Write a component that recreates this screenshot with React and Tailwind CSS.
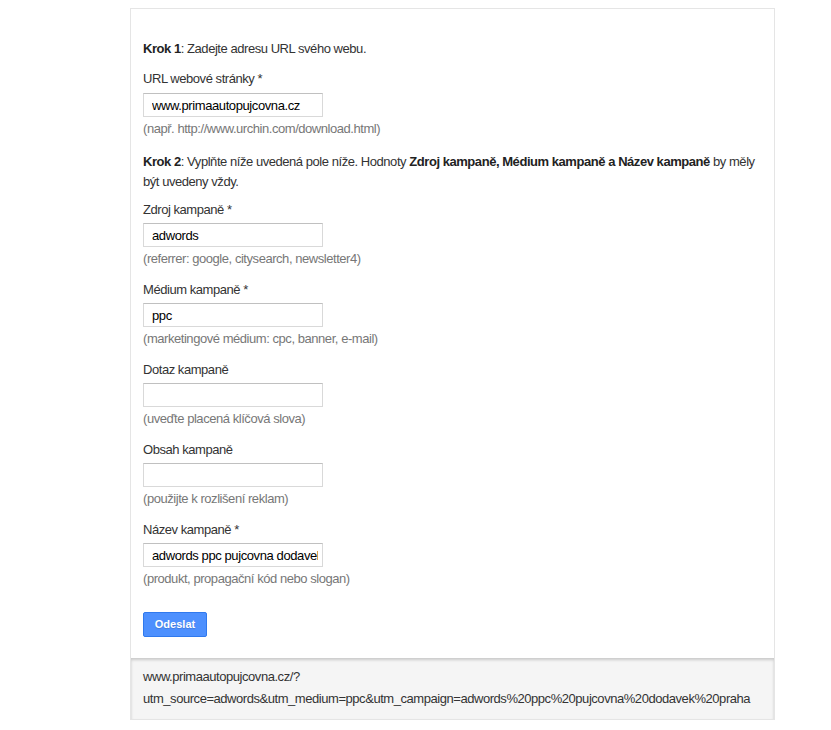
import React from "react";

const inputCls =
  "block h-6 w-[180px] border border-[#d9d9d9] border-t-[#c0c0c0] bg-white pl-2 pr-1 text-[13px] tracking-[-0.4px] text-black outline-none";

const Field = ({ label, value, hint, last }) => (
  <div className={last ? "" : "mb-[11px]"}>
    <div className="leading-5 text-[#333]">{label}</div>
    <input readOnly value={value} className={"mt-[3px] " + inputCls} style={{ fontFamily: "inherit" }} />
    <div className="mt-[2px] leading-5 text-[#777]">{hint}</div>
  </div>
);

export default function App() {
  return (
    <div
      className="min-h-[730px] bg-white pt-2 text-[13px] tracking-[-0.45px]"
      style={{ fontFamily: '"Liberation Sans", Arial, sans-serif' }}
    >
      <div className="ml-[130px] w-[645px] border border-[#e5e5e5]">
        <div className="pl-[12px] pr-[4px] pt-[30px] pb-[21px]">
          <div className="leading-5 text-[#333]">
            <b className="text-[#222]">Krok 1</b>: Zadejte adresu URL svého webu.
          </div>
          <div className="mt-[10px]">
            <div className="leading-5 text-[#333]">URL webové stránky *</div>
            <input
              readOnly
              value="www.primaautopujcovna.cz"
              className={"mt-[4px] " + inputCls}
              style={{ fontFamily: "inherit" }}
            />
            <div className="mt-[2px] leading-5 text-[#777]">
              (např. http://www.urchin.com/download.html)
            </div>
          </div>
          <div className="mt-[13px] mb-[8px] leading-5 text-[#333]">
            <b className="text-[#222]">Krok 2</b>: Vyplňte níže uvedená pole níže. Hodnoty{" "}
            <b className="text-[#222]">Zdroj kampaně, Médium kampaně a Název kampaně</b> by měly
            <br />
            být uvedeny vždy.
          </div>
          <Field
            label="Zdroj kampaně *"
            value="adwords"
            hint="(referrer: google, citysearch, newsletter4)"
          />
          <Field
            label="Médium kampaně *"
            value="ppc"
            hint="(marketingové médium: cpc, banner, e-mail)"
          />
          <Field label="Dotaz kampaně" value="" hint="(uveďte placená klíčová slova)" />
          <Field label="Obsah kampaně" value="" hint="(použijte k rozlišení reklam)" />
          <Field
            label="Název kampaně *"
            value="adwords ppc pujcovna dodavek praha"
            hint="(produkt, propagační kód nebo slogan)"
            last
          />
          <button className="mt-[23px] flex h-[25px] w-[64px] items-center justify-center rounded-[2px] border border-[#3079ed] bg-[#4d90fe] text-[11px] font-bold tracking-normal text-white [text-shadow:0_1px_1px_rgba(0,0,0,0.15)]">
            Odeslat
          </button>
        </div>
        <div className="bg-[#f5f5f5] px-[12px] pt-[8px] pb-[9px] leading-[22px] text-[#333] shadow-[inset_0_2px_3px_rgba(0,0,0,0.18)]">
          www.primaautopujcovna.cz/?
          <br />
          utm_source=adwords&amp;utm_medium=ppc&amp;utm_campaign=adwords%20ppc%20pujcovna%20dodavek%20praha
        </div>
      </div>
    </div>
  );
}
